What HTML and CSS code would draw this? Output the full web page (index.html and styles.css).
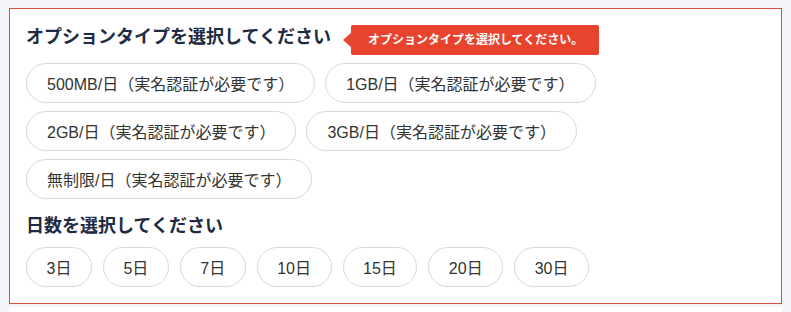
FILE: index.html
```html
<!DOCTYPE html>
<html lang="ja">
<head>
<meta charset="utf-8">
<link rel="stylesheet" href="styles.css">
</head>
<body>
<div class="page">
  <div class="card">
    <div class="head">
      <h2 class="title">オプションタイプを選択してください</h2>
      <div class="tip">オプションタイプを選択してください。</div>
    </div>
    <div class="pills">
      <button class="pill">500MB/日（実名認証が必要です）</button>
      <button class="pill">1GB/日（実名認証が必要です）</button>
      <button class="pill">2GB/日（実名認証が必要です）</button>
      <button class="pill">3GB/日（実名認証が必要です）</button>
      <button class="pill">無制限/日（実名認証が必要です）</button>
    </div>
    <h2 class="title title2">日数を選択してください</h2>
    <div class="pills days">
      <button class="pill">3日</button>
      <button class="pill">5日</button>
      <button class="pill">7日</button>
      <button class="pill">10日</button>
      <button class="pill">15日</button>
      <button class="pill">20日</button>
      <button class="pill">30日</button>
    </div>
  </div>
  <div class="next"></div>
</div>
</body>
</html>
```

FILE: styles.css
```css
html, body {
  margin: 0;
  padding: 0;
}
body {
  background: #f3f4f8;
  font-family: "Liberation Sans", "Noto Sans CJK JP", sans-serif;
}
.page {
  padding: 8px 9px 0 9px;
}
.card {
  background: #fff;
  border: 1px solid #d2503f;
  padding: 16px 16px 16px 16px;
}
.head {
  display: flex;
  align-items: flex-start;
}
.title {
  margin: 0;
  font-size: 18px;
  line-height: 24px;
  font-weight: 700;
  color: #1d2b43;
}
.tip {
  position: relative;
  margin-left: 20px;
  background: #e8432d;
  color: #fff;
  font-size: 12px;
  font-weight: 700;
  line-height: 30px;
  height: 30px;
  padding: 0 16px 0 17px;
  border-radius: 2px;
  white-space: nowrap;
}
.tip::before {
  content: "";
  position: absolute;
  left: -8px;
  top: 8px;
  border-style: solid;
  border-width: 7px 8px 7px 0;
  border-color: transparent #e8432d transparent transparent;
}
.pills {
  display: flex;
  flex-wrap: wrap;
  gap: 8px 10px;
  margin-top: 8px;
}
.title2 {
  margin-top: 15px;
}
.title2 + .pills {
  margin-top: 9px;
}
.days {
  gap: 8px 11px;
}
.days .pill {
  padding: 0 19.5px;
}
.pill {
  font-family: "Liberation Sans", "Noto Sans CJK JP", sans-serif;
  font-size: 16px;
  color: #333;
  background: #fff;
  border: 1px solid #d9d9d9;
  border-radius: 20px;
  height: 40px;
  padding: 0 20px;
  margin: 0;
  white-space: nowrap;
}
.next {
  background: #fff;
  height: 20px;
  margin-top: 3px;
}
```
